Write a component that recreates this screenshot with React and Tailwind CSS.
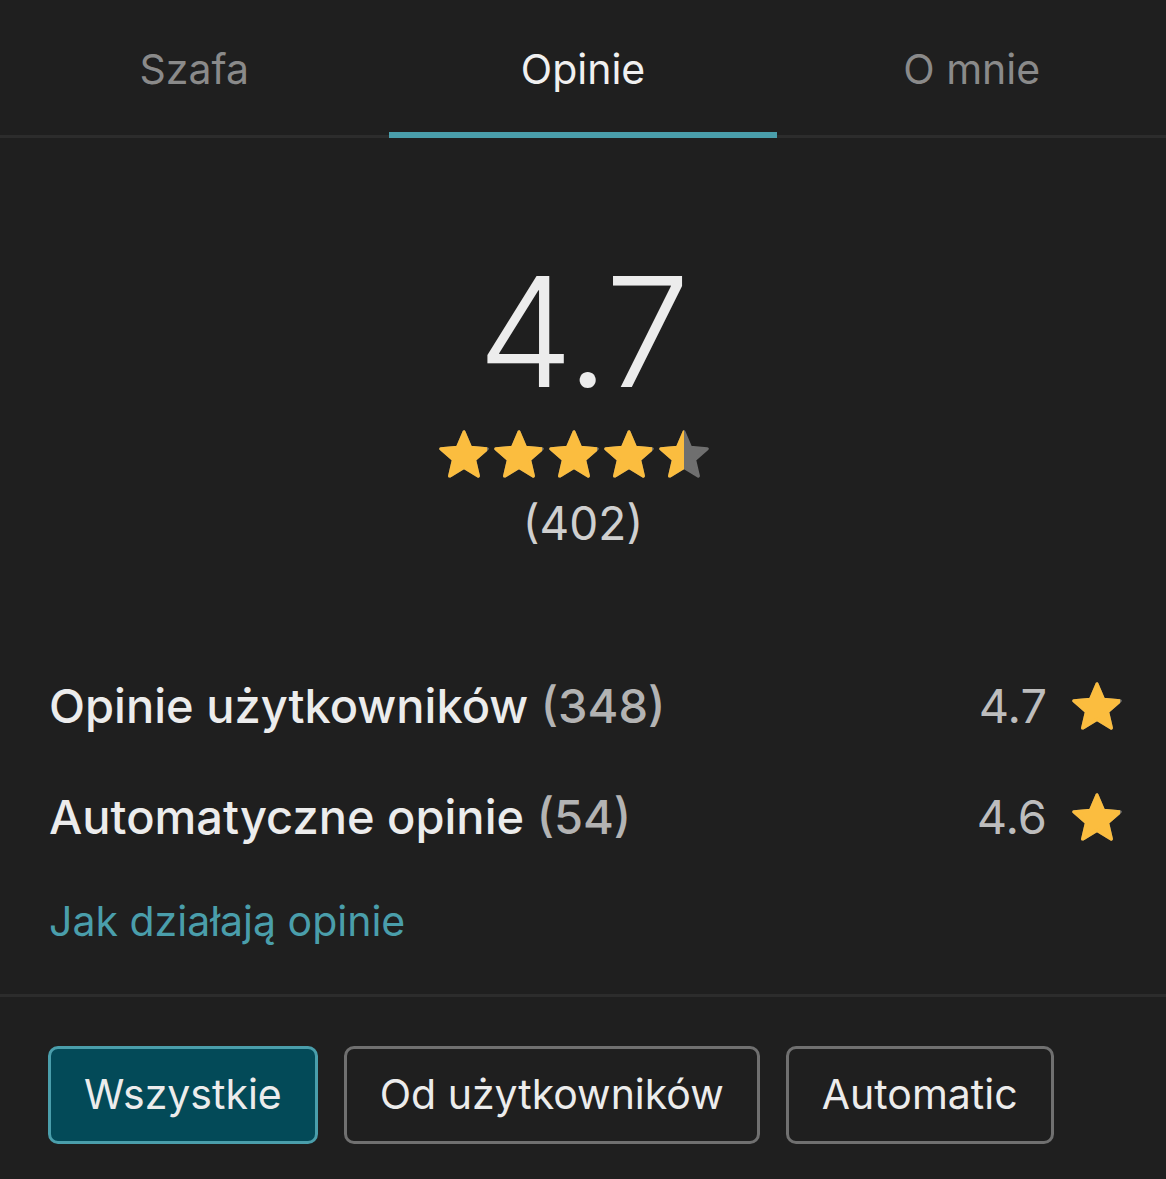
import React, { useState } from 'react';

const STAR = 'M12 17.27L18.18 21l-1.64-7.03L22 9.24l-7.19-.61L12 2 9.19 8.63 2 9.24l5.46 4.73L5.82 21z';

const Star = ({ fill = 1, id, className = '' }) => (
  <svg viewBox="1.2 1.2 21.6 20.6" className={className}>
    <defs>
      <clipPath id={id}>
        <rect x="0" y="0" width={2 + 20 * fill} height="24" />
      </clipPath>
    </defs>
    <path d={STAR} fill="#6f6f6f" stroke="#6f6f6f" strokeWidth="1.4" strokeLinejoin="round" />
    <path
      d={STAR}
      fill="#fbbd3f"
      stroke="#fbbd3f"
      strokeWidth="1.4"
      strokeLinejoin="round"
      clipPath={`url(#${id})`}
    />
  </svg>
);

const tabs = ['Szafa', 'Opinie', 'O mnie'];
const filters = ['Wszystkie', 'Od użytkowników', 'Automatic'];

const App = () => {
  const [activeTab, setActiveTab] = useState(1);
  const [activeFilter, setActiveFilter] = useState(0);

  return (
    <div
      className="min-h-[1179px] w-full bg-[#1f1f1f] text-[#ececec]"
      style={{ fontFamily: 'Inter, "Noto Sans", sans-serif' }}
    >
      {/* Tabs */}
      <div className="flex border-b-[3px] border-[#2c2c2c]">
        {tabs.map((tab, i) => (
          <button
            key={tab}
            onClick={() => setActiveTab(i)}
            className={`relative flex h-[135px] flex-1 items-center justify-center pt-[4px] text-[41px] ${
              activeTab === i ? 'text-[#f0f0f0]' : 'text-[#8a8a8a]'
            }`}
          >
            {tab}
            {activeTab === i && (
              <span className="absolute bottom-[-3px] left-0 right-0 h-[6px] bg-[#4a9eab]" />
            )}
          </button>
        ))}
      </div>

      {/* Summary */}
      <div className="flex flex-col items-center pt-[118px]">
        <div className="text-[152px] font-light leading-none tracking-[-2px] text-[#ececec]">4.7</div>
        <div className="mt-[22px] flex gap-[5px] pr-[18px]">
          {[1, 1, 1, 1, 0.5].map((f, i) => (
            <Star key={i} fill={f} id={`big-star-${i}`} className="h-[48px] w-[50px]" />
          ))}
        </div>
        <div className="mt-[22px] text-[46px] leading-none text-[#cfcfcf]">(402)</div>
      </div>

      {/* Breakdown */}
      <div className="pl-[49px] pr-[44px] pt-[132px]">
        <div className="flex h-[56px] items-center justify-between">
          <div className="text-[47px] font-medium">
            Opinie użytkowników <span className="text-[#b3b3b3]">(348)</span>
          </div>
          <div className="flex items-center gap-[25px]">
            <span className="text-[47px] text-[#bdbdbd]">4.7</span>
            <Star fill={1} id="row-star-1" className="h-[48px] w-[50px]" />
          </div>
        </div>
        <div className="mt-[55px] flex h-[56px] items-center justify-between">
          <div className="text-[47px] font-medium">
            Automatyczne opinie <span className="text-[#b3b3b3]">(54)</span>
          </div>
          <div className="flex items-center gap-[25px]">
            <span className="text-[47px] text-[#bdbdbd]">4.6</span>
            <Star fill={1} id="row-star-2" className="h-[48px] w-[50px]" />
          </div>
        </div>
        <a href="#" className="mt-[46px] block text-[41px] text-[#4a9eab]">
          Jak działają opinie
        </a>
      </div>

      <div className="mt-[41px] h-[3px] bg-[#2c2c2c]" />

      {/* Filters */}
      <div className="flex gap-[26px] px-[48px] pt-[49px]">
        {filters.map((f, i) => (
          <button
            key={f}
            onClick={() => setActiveFilter(i)}
            className={`flex h-[98px] items-center rounded-[10px] border-[3px] px-[33px] text-[41px] text-[#ececec] ${
              activeFilter === i ? 'border-[#4a9eab] bg-[#034a58]' : 'border-[#707070] bg-transparent'
            }`}
          >
            {f}
          </button>
        ))}
      </div>
    </div>
  );
};

export default App;
